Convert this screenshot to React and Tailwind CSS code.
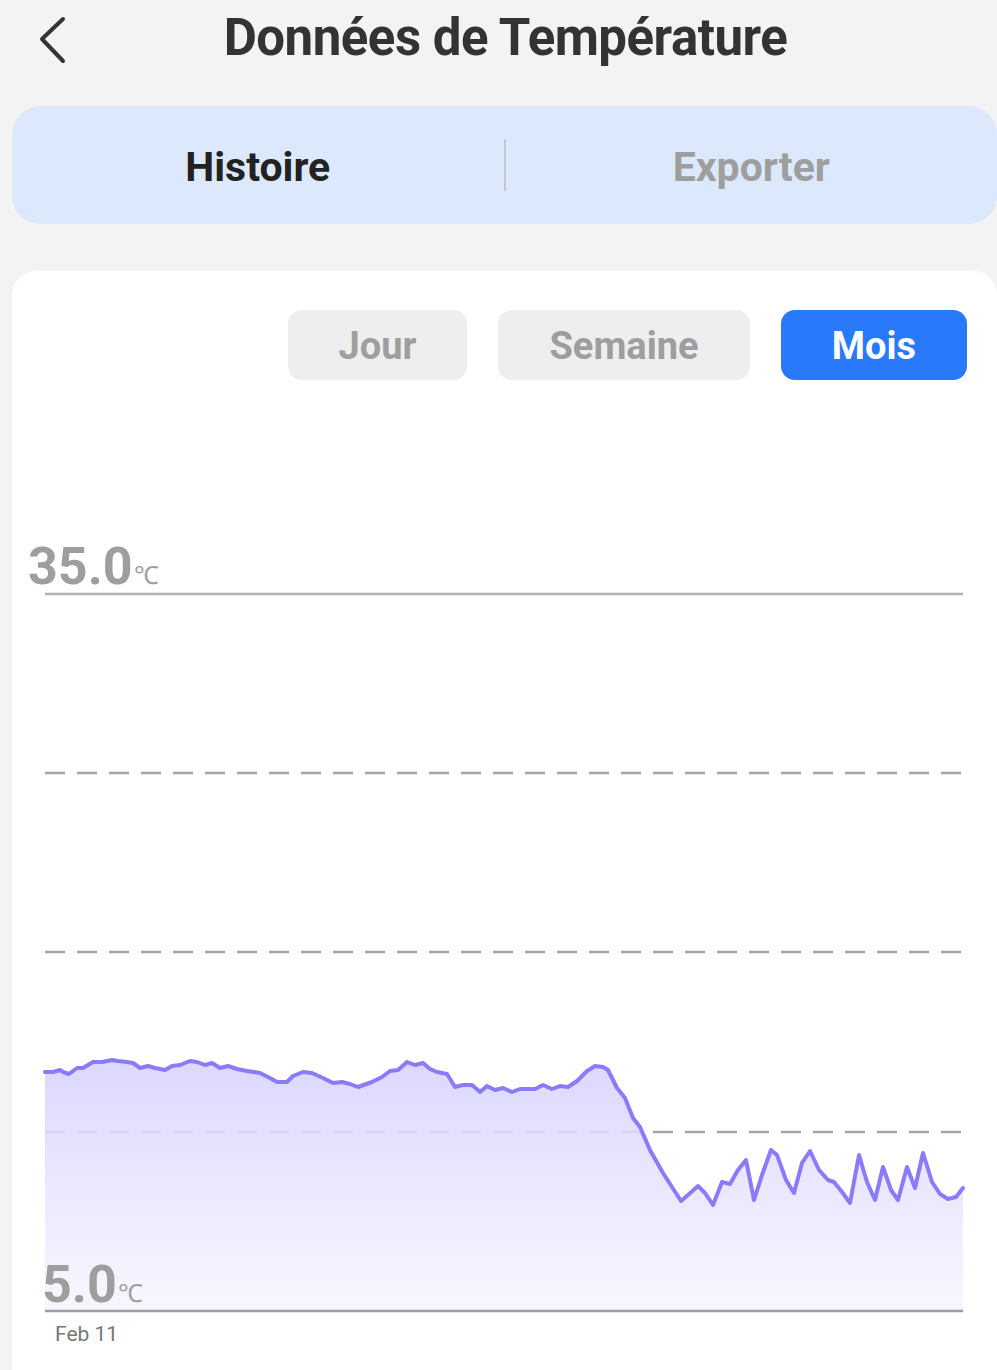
import { useState } from 'react'

const points = [
  [45, 1072], [53, 1072], [60, 1070], [63, 1072], [69, 1074], [77, 1068], [83, 1068], [93, 1062],
  [102, 1062], [112, 1060], [118, 1061], [127, 1062], [133, 1063], [140, 1068], [148, 1066],
  [155, 1068], [165, 1070], [172, 1066], [180, 1065], [190, 1061], [197, 1062], [205, 1065],
  [212, 1063], [220, 1068], [228, 1066], [237, 1069], [247, 1071], [260, 1073], [270, 1078],
  [277, 1082], [287, 1082], [293, 1076], [303, 1072], [312, 1073], [323, 1078], [333, 1083],
  [342, 1082], [350, 1084], [358, 1087], [372, 1082], [382, 1077], [390, 1071], [398, 1070],
  [407, 1062], [415, 1065], [423, 1063], [430, 1069], [437, 1072], [447, 1074], [455, 1087],
  [463, 1085], [472, 1085], [480, 1092], [487, 1086], [495, 1090], [503, 1088], [512, 1092],
  [520, 1089], [535, 1089], [543, 1085], [552, 1089], [560, 1086], [568, 1087], [577, 1081],
  [587, 1071], [595, 1066], [603, 1067], [608, 1070], [617, 1088], [625, 1098], [633, 1118],
  [640, 1127], [650, 1150], [663, 1173], [681, 1201], [688, 1195], [698, 1186], [705, 1193],
  [713, 1205], [722, 1182], [730, 1184], [738, 1170], [746, 1160], [754, 1200], [762, 1175],
  [771, 1150], [777, 1155], [786, 1180], [794, 1193], [802, 1163], [810, 1151], [819, 1170],
  [828, 1180], [834, 1182], [842, 1192], [850, 1203], [859, 1155], [867, 1182], [875, 1200],
  [883, 1167], [891, 1190], [898, 1200], [907, 1167], [915, 1188], [923, 1153], [932, 1182],
  [940, 1194], [948, 1199], [956, 1197], [963, 1188],
]

const linePath = points.map(([x, y], i) => `${i ? 'L' : 'M'}${x} ${y}`).join(' ')
const areaPath = `${linePath} L963 1311 L45 1311 Z`

function Chart() {
  return (
    <svg className="block" width="985" height="990" viewBox="12 380 985 990">
      <defs>
        <linearGradient id="tempFill" x1="0" y1="1060" x2="0" y2="1311" gradientUnits="userSpaceOnUse">
          <stop offset="0" stopColor="rgb(139,124,250)" stopOpacity="0.3" />
          <stop offset="1" stopColor="rgb(139,124,250)" stopOpacity="0.06" />
        </linearGradient>
      </defs>

      {/* grille */}
      <line x1="45" y1="594" x2="963" y2="594" stroke="#b3b3b3" strokeWidth="2.5" />
      {[773, 952, 1132].map(y => (
        <line key={y} x1="45" y1={y} x2="963" y2={y} stroke="#a6a6a6" strokeWidth="2.5" strokeDasharray="20 12" />
      ))}

      {/* zone sous la courbe : voile blanc puis dégradé, la grille reste à peine visible */}
      <path d={areaPath} fill="#ffffff" fillOpacity="0.8" />
      <path d={areaPath} fill="url(#tempFill)" />
      <path d={linePath} fill="none" stroke="#8a7bfb" strokeWidth="4" strokeLinejoin="round" strokeLinecap="round" />

      <line x1="45" y1="1311" x2="963" y2="1311" stroke="#9e9e9e" strokeWidth="2.5" />

      <text x="28" y="584" fill="#9e9e9e" fontFamily="Roboto, sans-serif" fontWeight="700" fontSize="52">
        35.0<tspan fontSize="25" fontWeight="400" dx="1">℃</tspan>
      </text>
      <text x="42" y="1302" fill="#9e9e9e" fontFamily="Roboto, sans-serif" fontWeight="700" fontSize="52">
        5.0<tspan fontSize="25" fontWeight="400" dx="1">℃</tspan>
      </text>
      <text x="55" y="1341" fill="#777777" fontFamily="Roboto, sans-serif" fontSize="21">Feb 11</text>
    </svg>
  )
}

export default function App() {
  const [tab, setTab] = useState('histoire')
  const [range, setRange] = useState('mois')

  const ranges = [
    { key: 'jour', label: 'Jour', w: 'w-[179px]' },
    { key: 'semaine', label: 'Semaine', w: 'w-[252px]' },
    { key: 'mois', label: 'Mois', w: 'w-[186px]' },
  ]

  return (
    <div className="w-[997px] h-[1370px] overflow-hidden bg-[#f3f3f3] font-['Roboto',sans-serif]">
      {/* Header */}
      <div className="relative h-[75px] flex items-center justify-center pl-[14px]">
        <button className="absolute left-[32px] top-[8px] p-1">
          <svg width="40" height="56" viewBox="0 0 40 56" fill="none" stroke="#333" strokeWidth="4" strokeLinecap="round" strokeLinejoin="round">
            <path d="M27 7 L6 27 L27 49" />
          </svg>
        </button>
        <h1 className="text-[51px] font-bold text-[#333333] leading-none tracking-[-0.5px]">Données de Température</h1>
      </div>

      {/* Onglets */}
      <div className="ml-[12px] mt-[31px] h-[118px] rounded-[28px] bg-[#dce9fd] flex items-center">
        <button
          onClick={() => setTab('histoire')}
          className={`flex-1 text-center text-[41px] font-bold pt-[5px] ${tab === 'histoire' ? 'text-[#222222]' : 'text-[#9e9e9e]'}`}
        >
          Histoire
        </button>
        <div className="w-[2px] h-[52px] bg-[#c4c8cf]" />
        <button
          onClick={() => setTab('exporter')}
          className={`flex-1 text-center text-[41px] font-bold pt-[5px] ${tab === 'exporter' ? 'text-[#222222]' : 'text-[#9e9e9e]'}`}
        >
          Exporter
        </button>
      </div>

      {/* Carte graphique */}
      <div className="ml-[12px] mt-[47px] bg-white rounded-t-[24px]">
        <div className="flex justify-end gap-[31px] pt-[39px] pr-[30px]">
          {ranges.map(r => (
            <button
              key={r.key}
              onClick={() => setRange(r.key)}
              className={`${r.w} h-[70px] rounded-[14px] text-[38px] font-bold pt-[3px] ${
                range === r.key ? 'bg-[#2979fb] text-white' : 'bg-[#eeeeee] text-[#9e9e9e]'
              }`}
            >
              {r.label}
            </button>
          ))}
        </div>
        <Chart />
      </div>
    </div>
  )
}
